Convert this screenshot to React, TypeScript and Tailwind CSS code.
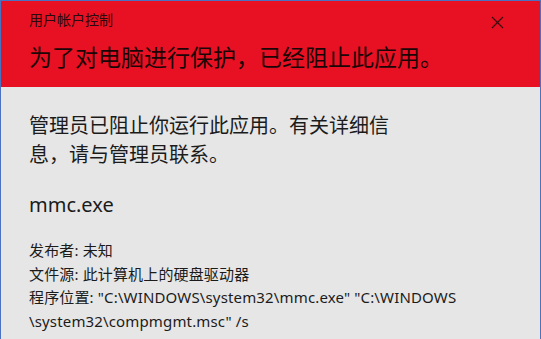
import * as React from 'react';

const cjk = '"Segoe UI", "Noto Sans", "Noto Sans CJK SC", sans-serif';

export default function App() {
  return (
    <div
      className="w-[541px] h-[339px] overflow-hidden border-x border-t border-[#4a72c0] bg-[#e6e6e6] text-[#1b1b1b]"
      style={{ fontFamily: cjk }}
    >
      <div className="relative h-[86px] bg-[#e81123] px-[28px]">
        <div className="pt-[9px] text-[14px] leading-[20px] text-[#2a0a0c]">用户帐户控制</div>
        <div className="mt-[12px] text-[23px] leading-[30px] text-[#1a0507]">
          为了对电脑进行保护，已经阻止此应用。
        </div>
        <button className="absolute right-[35px] top-[13px] flex h-[16px] w-[16px] items-center justify-center">
          <svg width="13" height="13" viewBox="0 0 13 13" fill="none" stroke="#3a0a0e" strokeWidth="1.2">
            <path d="M1 1L12 12M12 1L1 12" />
          </svg>
        </button>
      </div>

      <div className="px-[28px]">
        <p className="pt-[24px] text-[20px] leading-[29px]">
          管理员已阻止你运行此应用。有关详细信
          <br />
          息，请与管理员联系。
        </p>
        <p className="mt-[22px] text-[20px] leading-[28px]">mmc.exe</p>
        <div className="mt-[20px] text-[15px] leading-[23.5px] tracking-[0.15px]">
          <div>发布者: 未知</div>
          <div>文件源: 此计算机上的硬盘驱动器</div>
          <div>程序位置: "C:\WINDOWS\system32\mmc.exe" "C:\WINDOWS</div>
          <div>\system32\compmgmt.msc" /s</div>
        </div>
      </div>
    </div>
  );
}
